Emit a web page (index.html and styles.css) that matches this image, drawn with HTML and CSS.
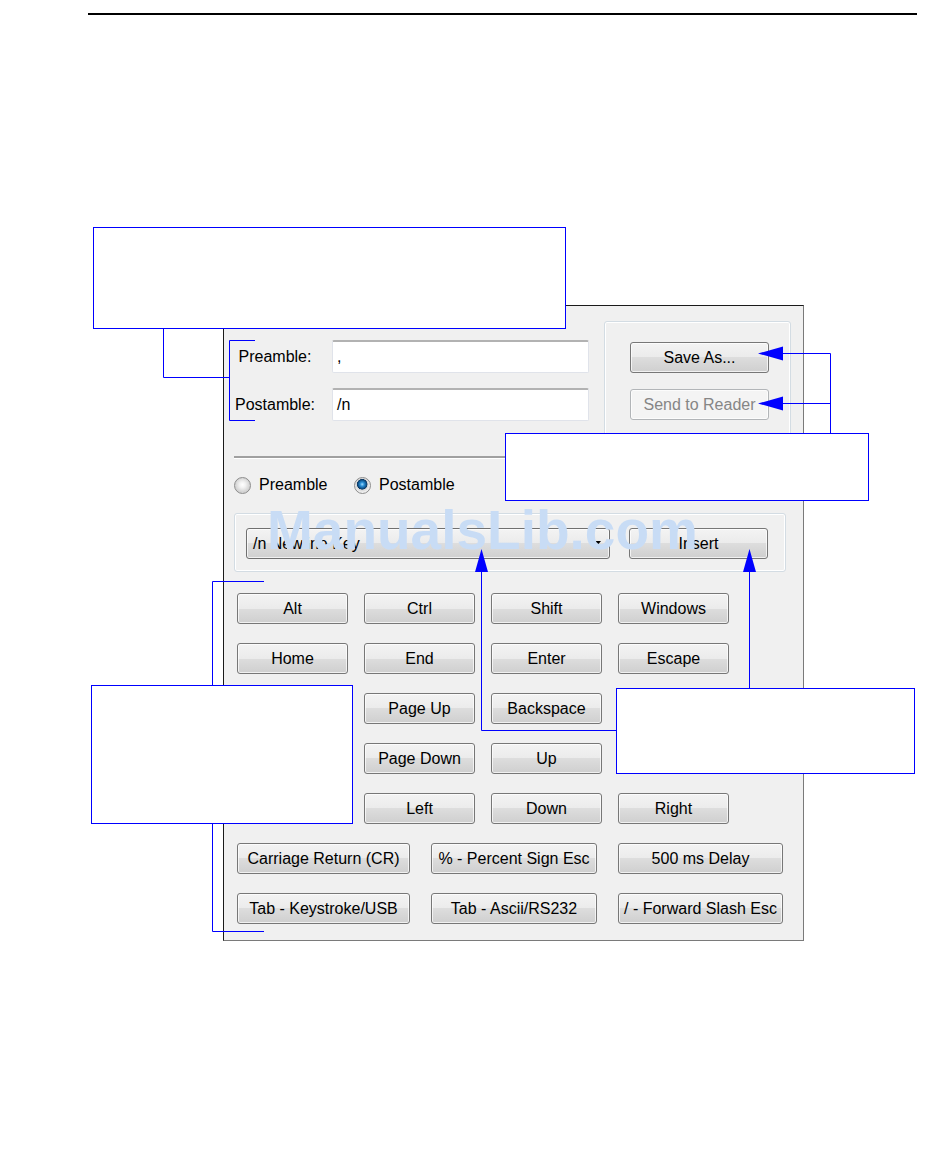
FILE: index.html
```html
<!DOCTYPE html>
<html lang="en">
<head>
    <meta charset="UTF-8">
    <meta name="viewport" content="width=device-width, initial-scale=1.0" />
    <title>Preamble / Postamble Editor</title>
    <link rel="stylesheet" href="styles.css">
</head>
<body>
<div class="page">
    <div class="rule"></div>

    <!-- Dialog -->
    <div class="dialog">
        <div class="top-row">
            <div class="fields">
                <label>Preamble:</label>
                <div class="textbox">,</div>
                <label>Postamble:</label>
                <div class="textbox">/n</div>
            </div>
            <div class="groupbox side-box">
                <button class="btn">Save As...</button>
                <button class="btn" disabled>Send to Reader</button>
            </div>
        </div>

        <div class="separator"></div>

        <div class="radios">
            <label class="radio-opt"><span class="radio"></span>Preamble</label>
            <label class="radio-opt"><span class="radio on"></span>Postamble</label>
        </div>

        <div class="groupbox insert-box">
            <div class="combo">/n Newline Key<span class="caret"></span></div>
            <button class="btn insert">Insert</button>
        </div>

        <div class="keys">
            <button class="btn">Alt</button>
            <button class="btn">Ctrl</button>
            <button class="btn">Shift</button>
            <button class="btn">Windows</button>
            <button class="btn">Home</button>
            <button class="btn">End</button>
            <button class="btn">Enter</button>
            <button class="btn">Escape</button>
            <span class="slot"></span>
            <button class="btn">Page Up</button>
            <button class="btn">Backspace</button>
            <span class="slot"></span>
            <span class="slot"></span>
            <button class="btn">Page Down</button>
            <button class="btn">Up</button>
            <span class="slot"></span>
            <span class="slot"></span>
            <button class="btn">Left</button>
            <button class="btn">Down</button>
            <button class="btn">Right</button>
        </div>

        <div class="keys-wide">
            <button class="btn">Carriage Return (CR)</button>
            <button class="btn">% - Percent Sign Esc</button>
            <button class="btn">500 ms Delay</button>
            <button class="btn">Tab - Keystroke/USB</button>
            <button class="btn">Tab - Ascii/RS232</button>
            <button class="btn">/ - Forward Slash Esc</button>
        </div>
    </div>

    <div class="watermark">ManualsLib.com</div>

    <!-- leader lines and arrows -->
    <svg class="leaders" width="950" height="1172" viewBox="0 0 950 1172">
        <g fill="none" stroke="#0000ff" stroke-width="1">
            <polyline points="163.5,328 163.5,377.5 229.5,377.5"/>
            <polyline points="255,340.5 229.5,340.5 229.5,420.5 255,420.5"/>
            <polyline points="782,353.5 830.5,353.5 830.5,433"/>
            <line x1="782" y1="403.5" x2="830.5" y2="403.5"/>
            <polyline points="481.5,570 481.5,730.5 617,730.5"/>
            <line x1="749.5" y1="570" x2="749.5" y2="688"/>
            <polyline points="264,581.5 212.5,581.5 212.5,931.5 264,931.5"/>
        </g>
        <g fill="#0000ff">
            <polygon points="758,353.5 783,346.5 783,360.5"/>
            <polygon points="758,403.5 783,396.5 783,410.5"/>
            <polygon points="481.5,549 475,572 488,572"/>
            <polygon points="749.5,549 743,572 756,572"/>
        </g>
    </svg>

    <div class="callout callout-a"></div>
    <div class="callout callout-b"></div>
    <div class="callout callout-c"></div>
    <div class="callout callout-d"></div>
</div>
</body>
</html>
```

FILE: styles.css
```css
body {
    margin: 0;
    background: #fff;
    font-family: "Liberation Sans", Arial, sans-serif;
    font-size: 16px;
    color: #000;
}
.page {
    position: relative;
    width: 950px;
    height: 1172px;
    overflow: hidden;
}
.rule {
    margin: 13px 0 0 88px;
    width: 829px;
    border-top: 2px solid #000;
}

/* dialog */
.dialog {
    box-sizing: border-box;
    width: 581px;
    height: 636px;
    margin: 290px 0 0 223px;
    padding: 15px 12px 0 10px;
    background: #f0f0f0;
    border-top: 1px solid #1a1a1a;
    border-left: 1px solid #1a1a1a;
    border-right: 1px solid #7a7a7a;
    border-bottom: 1px solid #7a7a7a;
}
.top-row {
    display: flex;
    justify-content: space-between;
    align-items: flex-start;
}
.fields {
    display: grid;
    grid-template-columns: 82px 257px;
    grid-auto-rows: 33px;
    column-gap: 16px;
    row-gap: 15px;
    margin-top: 19px;
}
.fields label {
    text-align: center;
    line-height: 33px;
}
.textbox {
    box-sizing: border-box;
    background: #fff;
    border: 1px solid #e0e3ea;
    border-top: 2px solid #b2b2b2;
    border-radius: 2px;
    padding: 0 4px;
    line-height: 30px;
}
.groupbox {
    box-sizing: border-box;
    border: 1px solid #d3dce3;
    border-radius: 3px;
    box-shadow: inset 0 0 0 1px #fff;
}
.side-box {
    width: 187px;
    height: 124px;
    padding: 20px 0 0 25px;
    display: flex;
    flex-direction: column;
    gap: 16px;
}
.side-box .btn {
    width: 139px;
    height: 31px;
}
.separator {
    margin-top: 11px;
    height: 2px;
    background: #a0a0a0;
    border-bottom: 1px solid #fff;
}
.radios {
    display: flex;
    align-items: center;
    margin-top: 18px;
    height: 16px;
}
.radio-opt {
    display: flex;
    align-items: center;
    gap: 8px;
}
.radio-opt:first-child {
    width: 120px;
}
.radio {
    box-sizing: border-box;
    width: 17px;
    height: 17px;
    border-radius: 50%;
    border: 1px solid #8c8c8c;
    background: radial-gradient(circle at 50% 45%, #fff 0, #f2f2f2 3px, #d4d4d4 7px);
}
.radio.on {
    background: radial-gradient(circle at 48% 42%, #9fdcff 0, #2a8fd6 2px, #11568f 4px, #0b3660 5px, #d6d6d6 5.5px, #f0f0f0 8px);
}
.insert-box {
    margin: 20px 5px 0 0;
    height: 59px;
    padding: 14px 0 0 11px;
    display: flex;
    align-items: flex-start;
    gap: 19px;
}
.combo {
    box-sizing: border-box;
    width: 364px;
    height: 31px;
    display: flex;
    align-items: center;
    padding: 0 6px;
    border: 1px solid #707070;
    border-radius: 3px;
    background: linear-gradient(#f3f3f3 0%, #ebebeb 50%, #dddddd 50%, #d0d0d0 100%);
    box-shadow: inset 0 0 0 1px rgba(255,255,255,0.7);
}
.caret {
    margin-left: auto;
    margin-right: 2px;
    border-left: 4px solid transparent;
    border-right: 4px solid transparent;
    border-top: 5px solid #000;
}
.insert {
    width: 139px;
    height: 31px;
}

/* buttons */
.btn {
    box-sizing: border-box;
    margin: 0;
    padding: 0;
    font-family: "Liberation Sans", Arial, sans-serif;
    font-size: 16px;
    color: #000;
    white-space: nowrap;
    border: 1px solid #777;
    border-radius: 3px;
    background: linear-gradient(#f3f3f3 0%, #ebebeb 50%, #dddddd 50%, #cfcfcf 100%);
    box-shadow: inset 0 0 0 1px rgba(255,255,255,0.7);
}
.btn:disabled {
    color: #868686;
    border-color: #b2b5b8;
    background: #f4f4f4;
}
.keys {
    display: grid;
    grid-template-columns: repeat(4, 111px);
    grid-auto-rows: 31px;
    column-gap: 16px;
    row-gap: 19px;
    margin: 21px 0 0 3px;
}
.keys-wide {
    display: grid;
    grid-template-columns: 173px 166px 165px;
    grid-auto-rows: 31px;
    column-gap: 21px;
    row-gap: 19px;
    margin: 19px 0 0 3px;
}

/* overlays */
.watermark {
    position: absolute;
    left: 267px;
    top: 503px;
    font-size: 55px;
    line-height: 1;
    font-weight: bold;
    color: #c8dcf5;
    white-space: nowrap;
}
.leaders {
    position: absolute;
    left: 0;
    top: 0;
}
.callout {
    position: absolute;
    box-sizing: border-box;
    background: #fff;
    border: 1px solid #0000ff;
}
.callout-a {
    left: 93px;
    top: 227px;
    width: 473px;
    height: 102px;
}
.callout-b {
    left: 505px;
    top: 433px;
    width: 364px;
    height: 68px;
}
.callout-c {
    left: 616px;
    top: 688px;
    width: 299px;
    height: 86px;
}
.callout-d {
    left: 91px;
    top: 685px;
    width: 262px;
    height: 139px;
}
```
